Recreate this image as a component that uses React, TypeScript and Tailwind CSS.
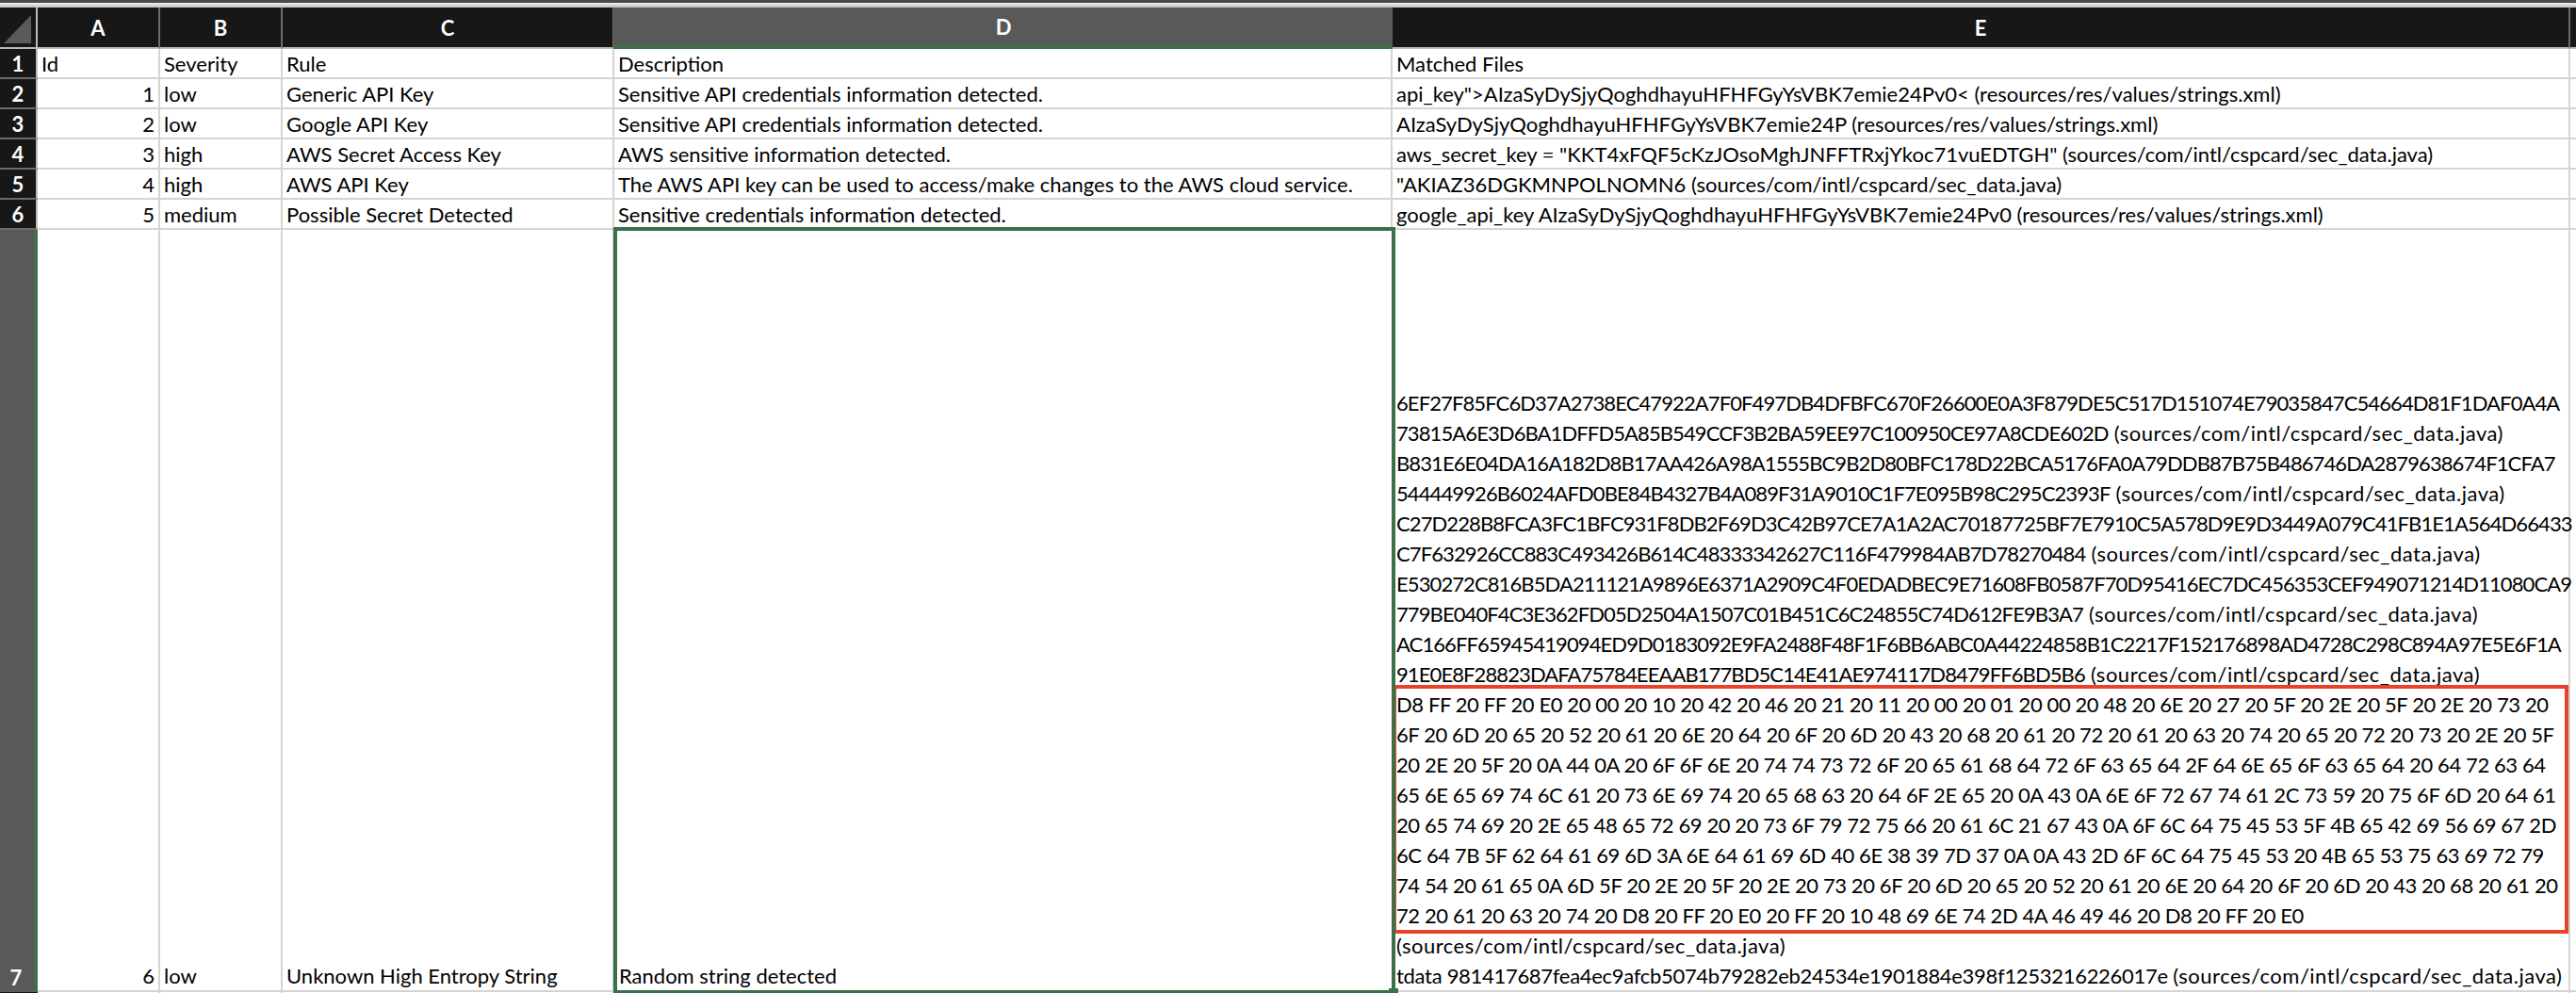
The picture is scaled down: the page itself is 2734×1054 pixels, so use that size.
const rows = [
  ["Id", "Severity", "Rule", "Description", "Matched Files"],
  ["1", "low", "Generic API Key", "Sensitive API credentials information detected.", 'api_key">AIzaSyDySjyQoghdhayuHFHFGyYsVBK7emie24Pv0< (resources/res/values/strings.xml)'],
  ["2", "low", "Google API Key", "Sensitive API credentials information detected.", "AIzaSyDySjyQoghdhayuHFHFGyYsVBK7emie24P (resources/res/values/strings.xml)"],
  ["3", "high", "AWS Secret Access Key", "AWS sensitive information detected.", 'aws_secret_key = "KKT4xFQF5cKzJOsoMghJNFFTRxjYkoc71vuEDTGH" (sources/com/intl/cspcard/sec_data.java)'],
  ["4", "high", "AWS API Key", "The AWS API key can be used to access/make changes to the AWS cloud service.", '"AKIAZ36DGKMNPOLNOMN6 (sources/com/intl/cspcard/sec_data.java)'],
  ["5", "medium", "Possible Secret Detected", "Sensitive credentials information detected.", "google_api_key AIzaSyDySjyQoghdhayuHFHFGyYsVBK7emie24Pv0 (resources/res/values/strings.xml)"],
];

const javaPath = "(sources/com/intl/cspcard/sec_data.java)";

const hexLines = [
  ["6EF27F85FC6D37A2738EC47922A7F0F497DB4DFBFC670F26600E0A3F879DE5C517D151074E79035847C54664D81F1DAF0A4A", false],
  ["73815A6E3D6BA1DFFD5A85B549CCF3B2BA59EE97C100950CE97A8CDE602D", true],
  ["B831E6E04DA16A182D8B17AA426A98A1555BC9B2D80BFC178D22BCA5176FA0A79DDB87B75B486746DA2879638674F1CFA7", false],
  ["544449926B6024AFD0BE84B4327B4A089F31A9010C1F7E095B98C295C2393F", true],
  ["C27D228B8FCA3FC1BFC931F8DB2F69D3C42B97CE7A1A2AC70187725BF7E7910C5A578D9E9D3449A079C41FB1E1A564D66433", false],
  ["C7F632926CC883C493426B614C48333342627C116F479984AB7D78270484", true],
  ["E530272C816B5DA211121A9896E6371A2909C4F0EDADBEC9E71608FB0587F70D95416EC7DC456353CEF949071214D11080CA9", false],
  ["779BE040F4C3E362FD05D2504A1507C01B451C6C24855C74D612FE9B3A7", true],
  ["AC166FF65945419094ED9D0183092E9FA2488F48F1F6BB6ABC0A44224858B1C2217F152176898AD4728C298C894A97E5E6F1A", false],
  ["91E0E8F28823DAFA75784EEAAB177BD5C14E41AE974117D8479FF6BD5B6", true],
] as const;

const boxed = [
  "D8 FF 20 FF 20 E0 20 00 20 10 20 42 20 46 20 21 20 11 20 00 20 01 20 00 20 48 20 6E 20 27 20 5F 20 2E 20 5F 20 2E 20 73 20",
  "6F 20 6D 20 65 20 52 20 61 20 6E 20 64 20 6F 20 6D 20 43 20 68 20 61 20 72 20 61 20 63 20 74 20 65 20 72 20 73 20 2E 20 5F",
  "20 2E 20 5F 20 0A 44 0A 20 6F 6F 6E 20 74 74 73 72 6F 20 65 61 68 64 72 6F 63 65 64 2F 64 6E 65 6F 63 65 64 20 64 72 63 64",
  "65 6E 65 69 74 6C 61 20 73 6E 69 74 20 65 68 63 20 64 6F 2E 65 20 0A 43 0A 6E 6F 72 67 74 61 2C 73 59 20 75 6F 6D 20 64 61",
  "20 65 74 69 20 2E 65 48 65 72 69 20 20 73 6F 79 72 75 66 20 61 6C 21 67 43 0A 6F 6C 64 75 45 53 5F 4B 65 42 69 56 69 67 2D",
  "6C 64 7B 5F 62 64 61 69 6D 3A 6E 64 61 69 6D 40 6E 38 39 7D 37 0A 0A 43 2D 6F 6C 64 75 45 53 20 4B 65 53 75 63 69 72 79",
  "74 54 20 61 65 0A 6D 5F 20 2E 20 5F 20 2E 20 73 20 6F 20 6D 20 65 20 52 20 61 20 6E 20 64 20 6F 20 6D 20 43 20 68 20 61 20",
  "72 20 61 20 63 20 74 20 D8 20 FF 20 E0 20 FF 20 10 48 69 6E 74 2D 4A 46 49 46 20 D8 20 FF 20 E0",
];

const colHeader = "flex items-center justify-center bg-[#171717] border-r-2 border-b-2 border-r-[#6b6b6b] border-b-[#bcbcbc] text-white font-bold";
const rowHeader = "flex items-center justify-center bg-[#171717] border-b-2 border-r-2 border-b-[#6b6b6b] border-r-[#bcbcbc] text-white font-bold";
const cell = "border-r-2 border-b-2 border-[#d4d4d4] px-[4px] leading-[32px] whitespace-nowrap";
const bottomCell = "flex flex-col justify-end border-r-2 border-b-2 border-[#d4d4d4] px-[4px] whitespace-nowrap";
const line = "h-[32px] leading-[34px]";

function App() {
  return (
    <div className="h-[1054px] w-[2734px] overflow-hidden bg-white font-['Lato','Liberation_Sans',sans-serif] text-[22px] text-black">
      <div className="h-[8px] border-t-[3px] border-t-[#4a4a4a] bg-gradient-to-b from-[#f2f2f2] to-[#bdbdbd]" />
      <div className="grid grid-cols-[40px_130px_130px_352px_826px_1250px_6px] grid-rows-[44px_32px_32px_32px_32px_32px_32px_809px_2px]">
        <div className="relative bg-[#171717] border-r-2 border-b-2 border-[#bcbcbc]">
          <svg width="38" height="42" className="absolute inset-0">
            <polygon points="4,38 33,38 33,8" fill="#5a5a5a" />
          </svg>
        </div>
        <div className={colHeader}>A</div>
        <div className={colHeader}>B</div>
        <div className={colHeader}>C</div>
        <div className="flex items-center justify-center bg-[#595959] border-b-4 border-[#3b7049] -mx-[1px] text-white font-bold">D</div>
        <div className={colHeader}>E</div>
        <div className="bg-[#171717] border-b-2 border-[#bcbcbc]" />

        {rows.map((r, i) => (
          <div key={i} className="contents">
            <div className={rowHeader}>{i + 1}</div>
            <div className={`${cell} ${i > 0 ? "text-right" : ""}`}>{r[0]}</div>
            <div className={cell}>{r[1]}</div>
            <div className={cell}>{r[2]}</div>
            <div className={cell}>{r[3]}</div>
            <div className={cell}>{r[4]}</div>
            <div className="border-b-2 border-[#d4d4d4]" />
          </div>
        ))}

        <div className="flex flex-col justify-end items-center bg-[#595959] border-r-4 border-[#3b7049] pr-[2px] text-white font-bold">
          <div className={line}>7</div>
        </div>
        <div className={`${bottomCell} items-end`}>
          <div className={line}>6</div>
        </div>
        <div className={bottomCell}>
          <div className={line}>low</div>
        </div>
        <div className={bottomCell}>
          <div className={line}>Unknown High Entropy String</div>
        </div>
        {/* selected cell sits over its neighbours, with the fill handle on the corner */}
        <div className="relative z-10 -ml-[1px] -mr-[3px] -mt-[3px] -mb-[2px] flex flex-col justify-end border-4 border-[#3b7049] px-[2px] whitespace-nowrap">
          <div className={line}>Random string detected</div>
          <div className="absolute -bottom-[4px] -right-[7px] h-[6px] w-[10px] bg-[#3b7049]" />
        </div>
        <div className={bottomCell}>
          {hexLines.map(([hex, withPath], i) => (
            <div key={i} className={line}>
              <span className="tracking-[-0.9px]">{hex}</span>
              {withPath && <span className="tracking-[0.5px]"> {javaPath}</span>}
            </div>
          ))}
          <div className="outline-4 outline-[#e8432a] tracking-[-0.4px]">
            {boxed.map((l, i) => (
              <div key={i} className={line}>
                {l}
              </div>
            ))}
          </div>
          <div className={`${line} tracking-[0.5px]`}>{javaPath}</div>
          <div className={line}>
            <span className="tracking-[-0.3px]">tdata 981417687fea4ec9afcb5074b79282eb24534e1901884e398f1253216226017e</span>{" "}
            <span className="tracking-[0.5px]">{javaPath}</span>
          </div>
        </div>
        <div className="border-b-2 border-[#d4d4d4]" />

        <div className="bg-[#171717]" />
        <div className="border-r-2 border-[#d4d4d4]" />
        <div className="border-r-2 border-[#d4d4d4]" />
        <div className="border-r-2 border-[#d4d4d4]" />
        <div />
        <div className="border-r-2 border-[#d4d4d4]" />
        <div />
      </div>
    </div>
  );
}

export default App;
